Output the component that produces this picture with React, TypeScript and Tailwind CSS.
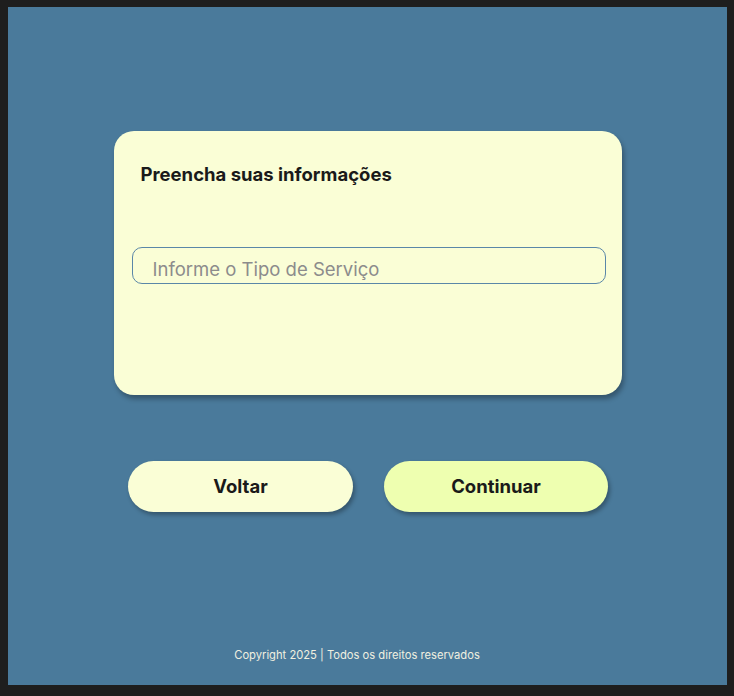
export default function App() {
  return (
    <div className="w-[734px] h-[696px] bg-[#1e1e1e] pt-[7px] pl-[8px] pr-[7px] pb-[11px] font-['Inter',sans-serif]">
      <div className="h-full bg-[#4a7a9b] flex flex-col items-center">
        <div className="mt-[124px] w-[508px] h-[264px] rounded-[20px] bg-[#fafed6] shadow-[2px_4px_5px_rgba(0,0,0,0.3)] pt-[32px] pl-[18px] pr-[16px]">
          <h1 className="pl-[9px] text-[18.5px] leading-[22px] font-bold text-[#1a1a1a]">
            Preencha suas informações
          </h1>
          <input
            type="text"
            placeholder="Informe o Tipo de Serviço"
            className="mt-[62px] w-full h-[37px] rounded-[10px] border border-[#5a87a8] bg-transparent pl-[20px] pt-[6px] text-[18.5px] text-[#1a1a1a] placeholder:text-[#8c8c8c] outline-none"
          />
        </div>
        <div className="mt-[66px] ml-[1px] flex gap-[31px]">
          <button className="w-[225px] h-[51px] rounded-[26px] bg-[#fafed6] shadow-[2px_3px_4px_rgba(0,0,0,0.3)] text-[18.5px] font-bold text-[#1a1a1a]">
            Voltar
          </button>
          <button className="w-[224px] h-[51px] rounded-[26px] bg-[#eeffb0] shadow-[2px_3px_4px_rgba(0,0,0,0.3)] text-[18.5px] font-bold text-[#1a1a1a]">
            Continuar
          </button>
        </div>
        <p className="mt-auto mb-[21px] mr-[21px] text-[11.2px] text-[#f0f0e0]">
          Copyright 2025 | Todos os direitos reservados
        </p>
      </div>
    </div>
  );
}
